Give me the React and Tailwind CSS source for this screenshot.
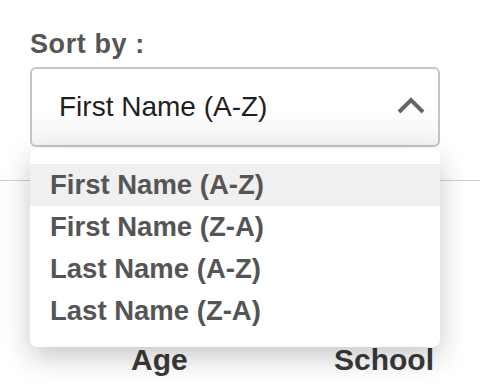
import React from 'react';

const options = [
    'First Name (A-Z)',
    'First Name (Z-A)',
    'Last Name (A-Z)',
    'Last Name (Z-A)',
];

const SortSelect = ({ value }) => {
    return (
        <div className="relative w-[410px]">
            {/* Trigger */}
            <div className="h-[80px] flex items-center justify-between border-2 border-[#c4c4c4] rounded-[6px] bg-linear-to-b from-white from-50% to-[#f4f4f4] pl-[27px] pr-[12px]">
                <span className="text-[28px] leading-[32px] text-[#1f1f1f]">{value}</span>
                <svg width="30" height="18" viewBox="0 0 30 18" className="mt-[-2px]">
                    <path d="M3 15 L15 3 L27 15" fill="none" stroke="#666" strokeWidth="4" />
                </svg>
            </div>

            {/* Menu */}
            <div className="absolute left-0 top-[calc(100%+2px)] z-10 w-[410px] bg-white rounded-[7px] py-[15px] shadow-[0_10px_28px_rgba(0,0,0,0.22)]">
                {options.map((opt) => (
                    <div
                        key={opt}
                        className={`h-[42px] flex items-center pl-[20px] text-[27.5px] font-bold text-[#555] ${
                            opt === value ? 'bg-[#f0f0f0]' : ''
                        }`}
                    >
                        {opt}
                    </div>
                ))}
            </div>
        </div>
    );
};

const App = () => {
    return (
        <div className="w-[480px] h-[392px] overflow-hidden bg-white font-['Liberation_Sans',Arial,sans-serif]">
            <div className="px-[30px] pt-[29px]">
                <p className="text-[27px] leading-[30px] font-bold tracking-[0.6px] text-[#555] mb-[8px]">Sort by :</p>
                <SortSelect value="First Name (A-Z)" />
            </div>

            <div className="h-px bg-[#cfcfcf] mt-[33px]"></div>

            {/* Table header */}
            <div className="flex justify-between pl-[131px] pr-[46px] mt-[162px] text-[30px] leading-[34px] font-bold text-[#3a3a3a]">
                <span>Age</span>
                <span>School</span>
            </div>
        </div>
    );
};

export default App;
